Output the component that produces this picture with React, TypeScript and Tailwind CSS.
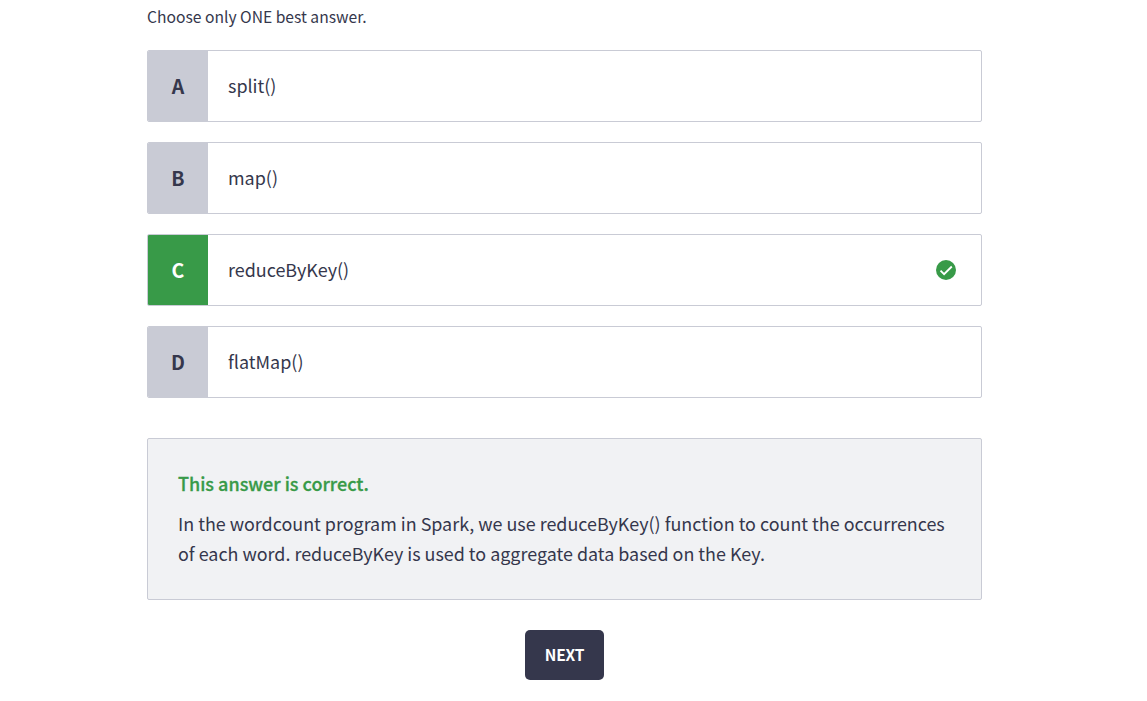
import React from "react";

type Answer = { letter: string; text: string; correct?: boolean };

const answers: Answer[] = [
  { letter: "A", text: "split()" },
  { letter: "B", text: "map()" },
  { letter: "C", text: "reduceByKey()", correct: true },
  { letter: "D", text: "flatMap()" },
];

function CheckIcon() {
  return (
    <svg className="h-5 w-5" viewBox="0 0 20 20" fill="none" aria-hidden="true">
      <circle cx="10" cy="10" r="10" fill="#389a48" />
      <path d="M4.5 10.6 L8.1 14.1 L15.8 6.5" stroke="#fff" strokeWidth="1.9" />
    </svg>
  );
}

function AnswerRow({ letter, text, correct }: Answer) {
  return (
    <li className="flex h-18 overflow-hidden rounded-xs border border-[#c9cbd5] bg-white">
      <span
        className={
          correct
            ? "flex w-15 items-center justify-center bg-[#389a48] text-[19.5px] font-bold text-white"
            : "flex w-15 items-center justify-center bg-[#c9cbd5] text-[19.5px] font-bold text-[#35374c]"
        }
      >
        {letter}
      </span>
      <span className="flex flex-1 items-center pb-0.5 pl-5 text-[17.95px]">{text}</span>
      {correct && (
        <span className="flex items-center pr-[25px]">
          <CheckIcon />
        </span>
      )}
    </li>
  );
}

export default function App() {
  return (
    <main className="h-[701px] overflow-hidden bg-white pl-[147px] font-['Noto_Sans_CJK_SC',sans-serif] text-[#35374c]">
      <div className="flex w-[835px] flex-col">
        <p className="mt-1 text-[15.65px] leading-[26px]">Choose only ONE best answer.</p>
        <ul className="mt-5 flex flex-col gap-5">
          {answers.map((a) => (
            <AnswerRow key={a.letter} {...a} />
          ))}
        </ul>
        <section className="mt-10 h-[162px] rounded-xs border border-[#c9cbd5] bg-[#f1f2f4] px-[30px] pt-[29px] text-[17.91px] leading-[30px]">
          <h2 className="text-[18px] font-medium text-[#389a48] [-webkit-text-stroke:0.3px_#389a48]">
            This answer is correct.
          </h2>
          <p className="mt-2.5 whitespace-nowrap">
            In the wordcount program in Spark, we use reduceByKey() function to count the occurrences
            <br />
            of each word. reduceByKey is used to aggregate data based on the Key.
          </p>
        </section>
        <button className="mt-[30px] h-[50px] w-[79px] self-center rounded-[5px] bg-[#35374c] text-[15.5px] font-bold tracking-[-0.2px] text-white">
          NEXT
        </button>
      </div>
    </main>
  );
}
